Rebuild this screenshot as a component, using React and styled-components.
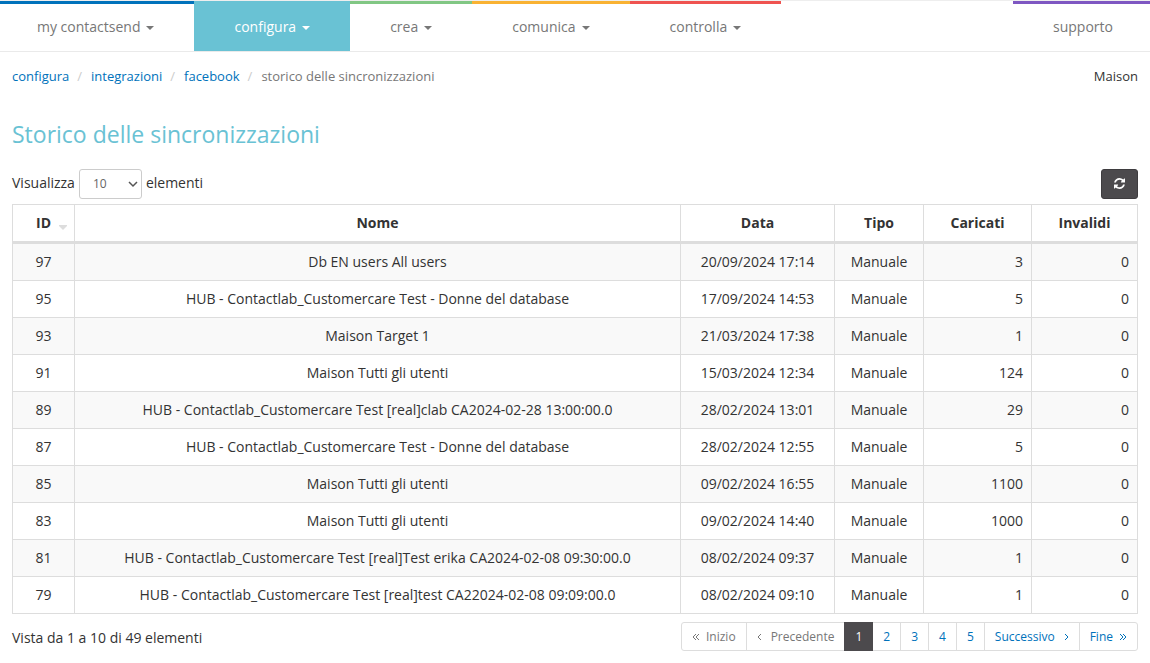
import React from "react";
import styled, { createGlobalStyle, css } from "styled-components";

const GlobalStyle = createGlobalStyle`
  *, *::before, *::after { box-sizing: border-box; }
  body {
    margin: 0;
    background: #fff;
    color: #333;
    font-family: "Open Sans", "Liberation Sans", sans-serif;
    font-size: 14px;
    line-height: 20px;
  }
`;

const Navbar = styled.nav`
  display: flex;
  justify-content: space-between;
  border-top: 1px solid #eee;
  border-bottom: 1px solid #eaeaea;
`;

const NavGroup = styled.div`
  display: flex;
`;

const NavItem = styled.button`
  display: flex;
  align-items: center;
  gap: 6px;
  height: 50px;
  padding: 0 40px 1px;
  border: 0;
  border-top: 3px solid ${(p) => p.$accent};
  background: ${(p) => (p.$active ? p.$accent : "transparent")};
  color: ${(p) => (p.$active ? "#fff" : "#777")};
  font: inherit;
  cursor: pointer;
  ${(p) => p.$edge === "left" && css`padding-left: 37px;`}
  ${(p) => p.$edge === "right" && css`padding-right: 37px;`}
`;

const NavLink = styled(NavItem).attrs({ as: "a" })`
  text-decoration: none;
`;

const Caret = styled.span`
  margin-top: 2px;
  border-top: 4px solid currentColor;
  border-left: 4px solid transparent;
  border-right: 4px solid transparent;
`;

const Page = styled.main`
  padding: 0 12px 12px;
`;

const TopLine = styled.div`
  display: flex;
  justify-content: space-between;
  padding-top: 14px;
  font-size: 13px;
`;

const Breadcrumb = styled.ol`
  display: flex;
  margin: 0;
  padding: 0;
  list-style: none;
  color: #777;
`;

const Crumb = styled.li`
  & + &::before {
    content: "/";
    padding: 0 9px 0 8px;
    color: #ccc;
  }
`;

const CrumbLink = styled.a`
  color: #0072bb;
  text-decoration: none;
`;

const Title = styled.h1`
  margin: 32px 0 19px;
  color: #69c2d4;
  font-size: 23px;
  font-weight: 400;
  line-height: 32px;
`;

const Toolbar = styled.div`
  display: flex;
  align-items: center;
  justify-content: space-between;
  margin-bottom: 5px;
`;

const LengthLabel = styled.label`
  display: flex;
  align-items: center;
  gap: 4px;
  height: 30px;
  padding-bottom: 2px;
`;

const SelectBox = styled.span`
  position: relative;
  display: flex;
  margin-top: 2px;
`;

const LengthSelect = styled.select`
  appearance: none;
  width: 63px;
  height: 30px;
  padding: 0 13px;
  border: 1px solid #ccc;
  border-radius: 3px;
  background: #fff;
  color: #666;
  font: inherit;
  font-size: 12px;
`;

const SelectArrow = styled.svg`
  position: absolute;
  right: 4px;
  top: 12px;
  pointer-events: none;
`;

const RefreshButton = styled.button`
  display: flex;
  align-items: center;
  justify-content: center;
  width: 37px;
  height: 30px;
  padding: 0 0 1px;
  border: 1px solid #3e3c3f;
  border-radius: 3px;
  background: #4c4a4d;
  color: #fff;
  cursor: pointer;
`;

const Table = styled.table`
  width: 100%;
  table-layout: fixed;
  border-collapse: separate;
  border-spacing: 0;
  border: solid #ddd;
  border-width: 1px 0 0 1px;
`;

const Col = styled.col`
  width: ${(p) => p.$width};
`;

const HeadCell = styled.th`
  position: relative;
  padding: 8px;
  border: solid #ddd;
  border-width: 0 1px 3px 0;
  font-weight: 700;
  text-align: center;
`;

const SortMark = styled.svg`
  position: absolute;
  right: 7px;
  bottom: 11px;
  fill: #ddd;
`;

const Row = styled.tr`
  &:nth-child(odd) { background: #f9f9f9; }
`;

const Cell = styled.td`
  padding: 8px;
  border: solid #ddd;
  border-width: 0 1px 1px 0;
  text-align: ${(p) => (p.$numeric ? "right" : "center")};
`;

const Footer = styled.div`
  display: flex;
  align-items: flex-start;
  justify-content: space-between;
  margin-top: 8px;
`;

const Info = styled.div`
  padding-top: 6px;
`;

const Pagination = styled.div`
  display: flex;
`;

const PageButton = styled.button`
  display: flex;
  align-items: center;
  gap: ${(p) => (p.$wide ? "9px" : "6px")};
  height: 29px;
  margin-left: -1px;
  padding: 0 10px;
  border: 1px solid #ddd;
  background: #fff;
  color: #0072bb;
  font: inherit;
  font-size: 12px;
  cursor: pointer;

  &:first-child { border-radius: 3px 0 0 3px; margin-left: 0; }
  &:last-child { border-radius: 0 3px 3px 0; }
  &:disabled { color: #777; cursor: default; }
  &[aria-current] {
    position: relative;
    border-color: #4c4a4d;
    background: #4c4a4d;
    color: #fff;
  }
`;

const menu = [
  { label: "my contactsend", accent: "#0072bb", edge: "left" },
  { label: "configura", accent: "#69c2d4", active: true },
  { label: "crea", accent: "#81c784" },
  { label: "comunica", accent: "#f9b233" },
  { label: "controlla", accent: "#ef5350" },
];

const crumbs = ["configura", "integrazioni", "facebook"];

const columns = [
  { label: "ID", width: "62px", sorted: true },
  { label: "Nome", width: "auto" },
  { label: "Data", width: "154px" },
  { label: "Tipo", width: "89px" },
  { label: "Caricati", width: "108px" },
  { label: "Invalidi", width: "106px" },
];

const rows = [
  [97, "Db EN users All users", "20/09/2024 17:14", "Manuale", 3, 0],
  [95, "HUB - Contactlab_Customercare Test - Donne del database", "17/09/2024 14:53", "Manuale", 5, 0],
  [93, "Maison Target 1", "21/03/2024 17:38", "Manuale", 1, 0],
  [91, "Maison Tutti gli utenti", "15/03/2024 12:34", "Manuale", 124, 0],
  [89, "HUB - Contactlab_Customercare Test [real]clab CA2024-02-28 13:00:00.0", "28/02/2024 13:01", "Manuale", 29, 0],
  [87, "HUB - Contactlab_Customercare Test - Donne del database", "28/02/2024 12:55", "Manuale", 5, 0],
  [85, "Maison Tutti gli utenti", "09/02/2024 16:55", "Manuale", 1100, 0],
  [83, "Maison Tutti gli utenti", "09/02/2024 14:40", "Manuale", 1000, 0],
  [81, "HUB - Contactlab_Customercare Test [real]Test erika CA2024-02-08 09:30:00.0", "08/02/2024 09:37", "Manuale", 1, 0],
  [79, "HUB - Contactlab_Customercare Test [real]test CA22024-02-08 09:09:00.0", "08/02/2024 09:10", "Manuale", 1, 0],
];

const chevrons = {
  first: { width: 8, d: "M4 1 1 4l3 3M7 1 4 4l3 3" },
  previous: { width: 5, d: "M4 1 1 4l3 3" },
  next: { width: 5, d: "M1 1l3 3-3 3" },
  last: { width: 8, d: "M1 1l3 3-3 3M4 1l3 3-3 3" },
};

function Chevron({ kind }) {
  const { width, d } = chevrons[kind];
  return (
    <svg width={width} height="8" viewBox={`0 0 ${width} 8`} fill="none" stroke="currentColor" aria-hidden="true">
      <path d={d} />
    </svg>
  );
}

function RefreshIcon() {
  return (
    <svg width="11" height="11" viewBox="0 0 1536 1536" fill="currentColor" aria-hidden="true">
      <path d="M1511 928q0 5-1 7-64 268-268 434.5t-478 166.5q-146 0-282.5-55t-243.5-157l-129 129q-19 19-45 19t-45-19-19-45v-448q0-26 19-45t45-19h448q26 0 45 19t19 45-19 45l-137 137q71 66 161 102t187 36q134 0 250-65t186-179q11-17 53-117 8-23 30-23h192q13 0 22.5 9.5t9.5 22.5zm25-800v448q0 26-19 45t-45 19h-448q-26 0-45-19t-19-45 19-45l138-138q-148-137-349-137-134 0-250 65t-186 179q-11 17-53 117-8 23-30 23h-199q-13 0-22.5-9.5t-9.5-22.5v-7q65-268 270-434.5t480-166.5q146 0 284 55.5t245 156.5l130-129q19-19 45-19t45 19 19 45z" />
    </svg>
  );
}

export default function App() {
  return (
    <>
      <GlobalStyle />
      <Navbar>
        <NavGroup>
          {menu.map((item) => (
            <NavItem key={item.label} type="button" $accent={item.accent} $active={item.active} $edge={item.edge}>
              {item.label}
              <Caret />
            </NavItem>
          ))}
        </NavGroup>
        <NavLink href="#supporto" $accent="#7e57c2" $edge="right">supporto</NavLink>
      </Navbar>
      <Page>
        <TopLine>
          <Breadcrumb>
            {crumbs.map((name) => (
              <Crumb key={name}>
                <CrumbLink href={`#${name}`}>{name}</CrumbLink>
              </Crumb>
            ))}
            <Crumb>storico delle sincronizzazioni</Crumb>
          </Breadcrumb>
          <span>Maison</span>
        </TopLine>
        <Title>Storico delle sincronizzazioni</Title>
        <Toolbar>
          <LengthLabel>
            Visualizza
            <SelectBox>
              <LengthSelect defaultValue="10">
                <option>10</option>
                <option>25</option>
                <option>50</option>
                <option>100</option>
              </LengthSelect>
              <SelectArrow width="10" height="7" viewBox="0 0 10 7" fill="none" stroke="#555" strokeWidth="1.5">
                <path d="M1 1l4 4 4-4" />
              </SelectArrow>
            </SelectBox>
            elementi
          </LengthLabel>
          <RefreshButton type="button" aria-label="Aggiorna">
            <RefreshIcon />
          </RefreshButton>
        </Toolbar>
        <Table>
          <colgroup>
            {columns.map((c) => (
              <Col key={c.label} $width={c.width} />
            ))}
          </colgroup>
          <thead>
            <tr>
              {columns.map((c) => (
                <HeadCell key={c.label} scope="col">
                  {c.label}
                  {c.sorted && (
                    <SortMark width="8" height="5" viewBox="0 0 8 5" aria-hidden="true">
                      <path d="M0 0h8v1L4 5 0 1z" />
                    </SortMark>
                  )}
                </HeadCell>
              ))}
            </tr>
          </thead>
          <tbody>
            {rows.map((row) => (
              <Row key={row[0]}>
                {row.map((value, i) => (
                  <Cell key={columns[i].label} $numeric={i > 3}>{value}</Cell>
                ))}
              </Row>
            ))}
          </tbody>
        </Table>
        <Footer>
          <Info>Vista da 1 a 10 di 49 elementi</Info>
          <Pagination>
            <PageButton type="button" disabled><Chevron kind="first" />Inizio</PageButton>
            <PageButton type="button" disabled $wide><Chevron kind="previous" />Precedente</PageButton>
            <PageButton type="button" aria-current="page">1</PageButton>
            {[2, 3, 4, 5].map((n) => (
              <PageButton key={n} type="button">{n}</PageButton>
            ))}
            <PageButton type="button" $wide>Successivo<Chevron kind="next" /></PageButton>
            <PageButton type="button">Fine<Chevron kind="last" /></PageButton>
          </Pagination>
        </Footer>
      </Page>
    </>
  );
}
